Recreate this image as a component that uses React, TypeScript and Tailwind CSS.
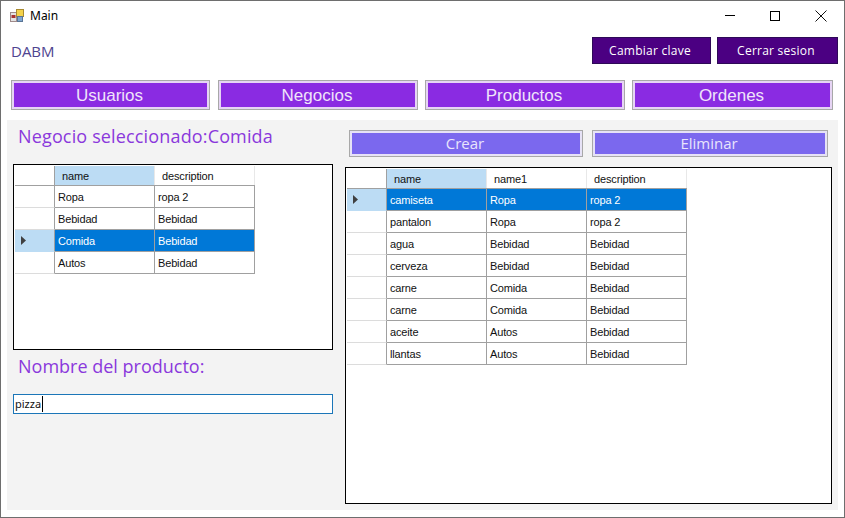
import React from 'react';

interface DataGridProps {
  columns: string[];
  rows: string[][];
  selected: number;
  className: string;
}

const DataGrid: React.FC<DataGridProps> = ({ columns, rows, selected, className }) => {
  return (
    <div className={`border border-black bg-white pl-px pt-px font-['Liberation_Sans',sans-serif] text-[11px] tracking-[-0.15px] text-[#111] ${className}`}>
      <div className="flex h-[20px] w-fit border-b border-[#a0a0a0]">
        <div className="w-[40px] border-r border-[#a0a0a0]" />
        {columns.map((col, i) => (
          <div
            key={col}
            className={`flex w-[100px] items-center border-r border-[#e8e8e8] pl-[7px] pt-px ${i === 0 ? 'bg-[#bcdcf4]' : ''}`}
          >
            {col}
          </div>
        ))}
      </div>
      {rows.map((row, r) => (
        <div key={r} className="flex h-[22px]">
          <div
            className={`flex w-[40px] items-center border-r border-b border-r-[#a0a0a0] pl-[6px] ${
              r === selected ? 'border-b-[#bcdcf4] bg-[#bcdcf4]' : 'border-b-[#dcdcdc]'
            }`}
          >
            {r === selected && (
              <svg width="5" height="9" viewBox="0 0 5 9">
                <path d="M0 0 L5 4.5 L0 9 Z" fill="#404040" />
              </svg>
            )}
          </div>
          {row.map((cell, c) => (
            <div
              key={c}
              className={`flex w-[100px] items-center border-r border-b border-[#a0a0a0] pl-[3px] pt-px ${
                r === selected ? 'bg-[#0078d7] text-white' : ''
              }`}
            >
              {cell}
            </div>
          ))}
        </div>
      ))}
    </div>
  );
};

const navItems = ['Usuarios', 'Negocios', 'Productos', 'Ordenes'];

const businessRows = [
  ['Ropa', 'ropa 2'],
  ['Bebidad', 'Bebidad'],
  ['Comida', 'Bebidad'],
  ['Autos', 'Bebidad'],
];

const productRows = [
  ['camiseta', 'Ropa', 'ropa 2'],
  ['pantalon', 'Ropa', 'ropa 2'],
  ['agua', 'Bebidad', 'Bebidad'],
  ['cerveza', 'Bebidad', 'Bebidad'],
  ['carne', 'Comida', 'Bebidad'],
  ['carne', 'Comida', 'Bebidad'],
  ['aceite', 'Autos', 'Bebidad'],
  ['llantas', 'Autos', 'Bebidad'],
];

export default function App() {
  return (
    <div className="flex h-[518px] w-[845px] flex-col border border-[#6e6e6e] bg-white font-['Open_Sans',sans-serif]">
      {/* title bar */}
      <div className="flex h-[29px] shrink-0 items-center pl-[9px]">
        <svg width="14" height="13" viewBox="0 0 14 13" className="mr-[6px]">
          <rect x="0.5" y="3.5" width="6" height="9" fill="#e4e4e4" stroke="#a08a8a" />
          <rect x="1.5" y="6" width="4" height="3" fill="#a83232" />
          <rect x="6.5" y="0.5" width="7" height="7" fill="#f4d24a" stroke="#a88a30" />
          <rect x="7.5" y="7.5" width="5" height="5" fill="#7fa6d0" stroke="#5a7596" />
        </svg>
        <span className="font-['Noto_Sans',sans-serif] text-[12px] text-black">Main</span>
        <div className="ml-auto flex items-center">
          <div className="mr-[35px] h-px w-[10px] bg-black" />
          <div className="mr-[35px] h-[10px] w-[10px] border border-black" />
          <svg width="12" height="12" viewBox="0 0 12 12" className="mr-[17px]">
            <path d="M0.5 0.5 L11.5 11.5 M11.5 0.5 L0.5 11.5" stroke="#111" strokeWidth="1" />
          </svg>
        </div>
      </div>

      {/* header row */}
      <div className="mt-[7px] flex h-[27px] shrink-0 items-center justify-between pl-[10px] pr-[6px]">
        <span className="pt-[2px] text-[15px] text-[#4f4490]">DABM</span>
        <div className="flex gap-[6px] text-[12px] text-white">
          <button className="h-[27px] w-[119px] border border-[#2e0a57] bg-[#4b0082] pr-[3px] tracking-[0.25px]">Cambiar clave</button>
          <button className="h-[27px] w-[121px] border border-[#2e0a57] bg-[#4b0082] pr-[3px] tracking-[0.25px]">Cerrar sesion</button>
        </div>
      </div>

      {/* nav */}
      <div className="ml-[10px] mt-[16px] grid h-[30px] w-[822px] shrink-0 grid-cols-[200px_200px_200px_201px] gap-[7px] font-['Liberation_Sans',sans-serif] text-[17px] text-[#f0e4fa]">
        {navItems.map((item, i) => (
          <button
            key={item}
            className={`border border-[#a8a8a8] bg-[#8a2be2] pr-[2px] pt-[2px] shadow-[inset_0_0_0_2px_#e6d4f4] ${i === 0 ? 'w-[199px]' : ''}`}
          >
            {item}
          </button>
        ))}
      </div>

      {/* panel */}
      <div className="ml-[6px] mt-[10px] flex h-[390px] w-[831px] gap-[12px] bg-[#f3f3f3] pl-[6px]">
        <div className="flex w-[320px] flex-col">
          <div className="mt-[3px] h-[26px] pl-[5px] text-[18px] leading-[26px] tracking-[0.15px] text-[#8a38dc]">Negocio seleccionado:Comida</div>
          <DataGrid columns={['name', 'description']} rows={businessRows} selected={2} className="mt-[15px] h-[186px]" />
          <div className="mt-[3px] h-[26px] pl-[5px] text-[18px] leading-[26px] text-[#8a38dc]">Nombre del producto:</div>
          <div className="mt-[15px] flex h-[20px] items-center border border-[#1b76b8] bg-white pl-px font-['Noto_Sans',sans-serif] text-[11px] text-[#111]">
            pizza
            <span className="ml-px h-[16px] w-px bg-black" />
          </div>
        </div>
        <div className="flex w-[487px] flex-col">
          <div className="mt-[10px] flex gap-[9px] pl-[4px] text-[15px] text-[#e8e4fc]">
            {['Crear', 'Eliminar'].map((label) => (
              <button
                key={label}
                className={`h-[27px] border border-[#a8a8a8] bg-[#7b68ee] pr-[2px] shadow-[inset_0_0_0_2px_#e6e2f6] ${label === 'Crear' ? 'w-[234px]' : 'w-[236px]'}`}
              >
                {label}
              </button>
            ))}
          </div>
          <DataGrid columns={['name', 'name1', 'description']} rows={productRows} selected={0} className="mt-[10px] h-[337px]" />
        </div>
      </div>
    </div>
  );
}
